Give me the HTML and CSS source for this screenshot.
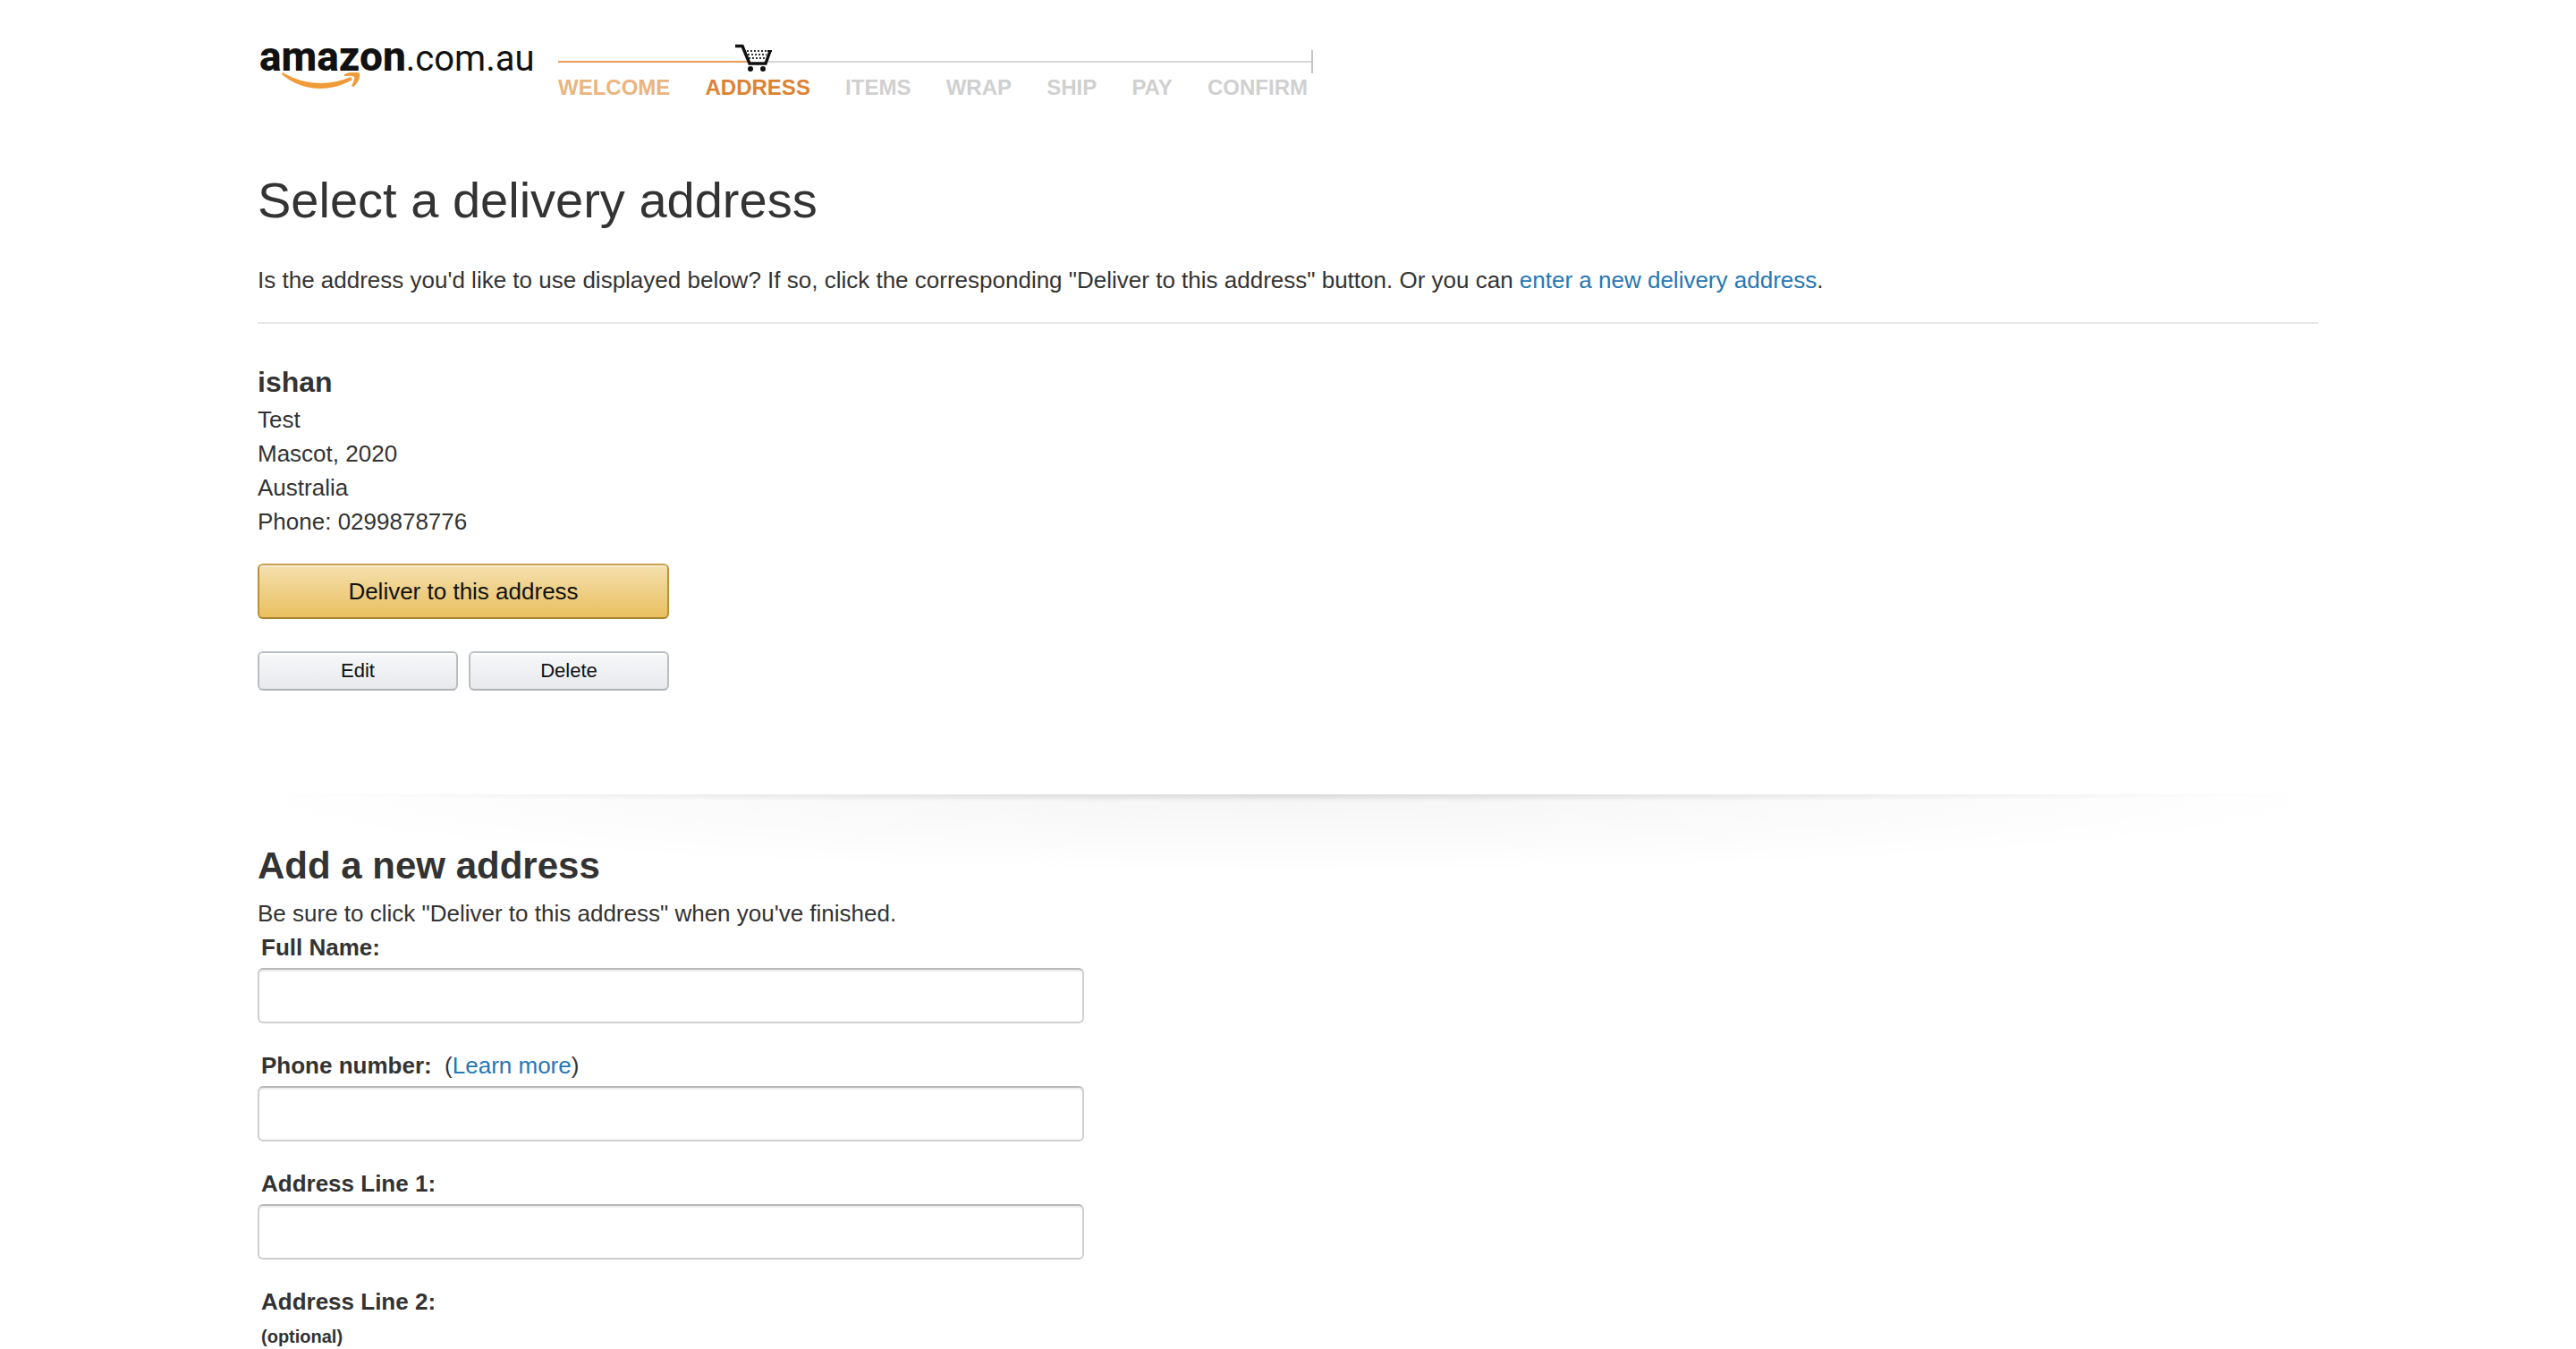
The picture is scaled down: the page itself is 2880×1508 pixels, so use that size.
FILE: index.html
```html
<!DOCTYPE html>
<html lang="en-AU">
<head>
<meta charset="utf-8">
<meta name="viewport" content="width=device-width, initial-scale=1">
<title>Select a delivery address</title>
<link rel="stylesheet" href="styles.css">
</head>
<body>
<div class="page">
  <header class="header">
    <div class="logo">
      <span class="logo-text"><b class="logo-name">amazon</b><span class="logo-domain">.com.au</span></span>
      <svg class="logo-smile" viewBox="0 0 88 20" aria-hidden="true">
        <path d="M1 0C24 14 52 16 77 5L79 8C54 23 22 21 0 2Z" fill="#f19a38"/>
        <path d="M70 2C76 -1 85 -1 87 1C88 6 85 12 80 16L78 15C80 11 82 7 81 5C79 3 74 4 70 4Z" fill="#f19a38"/>
      </svg>
    </div>
    <nav class="progress" aria-label="Checkout progress">
      <svg class="cart" viewBox="0 0 42 32" aria-hidden="true">
        <path d="M7 7H37L32 21H14Z" fill="#fff"/>
        <path d="M13 8H36M14 12H35M15 16H34" fill="none" stroke="#333" stroke-width="2" stroke-dasharray="2 2"/>
        <path d="M0 2.500H8L16 22H34L39 8" fill="none" stroke="#111" stroke-width="3.500"/>
        <path d="M36 8H41" stroke="#111" stroke-width="2"/>
        <circle cx="17" cy="28" r="3" fill="#111"/>
        <circle cx="31" cy="28" r="3" fill="#111"/>
      </svg>
      <div class="track"><span class="track-done"></span><span class="track-rest"></span><span class="track-end"></span></div>
      <ol class="steps">
        <li class="done">WELCOME</li>
        <li class="current" aria-current="step">ADDRESS</li>
        <li>ITEMS</li>
        <li>WRAP</li>
        <li>SHIP</li>
        <li>PAY</li>
        <li>CONFIRM</li>
      </ol>
    </nav>
  </header>

  <main>
    <h1>Select a delivery address</h1>
    <p class="intro">Is the address you'd like to use displayed below? If so, click the corresponding "Deliver to this address" button. Or you can <a href="#new-address">enter a new delivery address</a>.</p>

    <section class="saved">
      <h2 class="saved-name">ishan</h2>
      <address class="saved-lines">Test<br>Mascot, 2020<br>Australia<br>Phone: 0299878776</address>
      <div class="actions">
        <button type="button" class="btn btn-primary">Deliver to this address</button>
        <button type="button" class="btn btn-small">Edit</button>
        <button type="button" class="btn btn-small">Delete</button>
      </div>
    </section>

    <section class="new-address" id="new-address">
      <h2 class="new-title">Add a new address</h2>
      <p class="new-hint">Be sure to click "Deliver to this address" when you've finished.</p>
      <form class="form">
        <div class="field">
          <div class="field-head"><label for="name">Full Name:</label></div>
          <input type="text" id="name">
        </div>
        <div class="field">
          <div class="field-head"><label for="phone">Phone number:</label>&nbsp; (<a href="#phone">Learn more</a>)</div>
          <input type="text" id="phone">
        </div>
        <div class="field">
          <div class="field-head"><label for="line1">Address Line 1:</label></div>
          <input type="text" id="line1">
        </div>
        <div class="field">
          <div class="field-head"><strong>Address Line 2:</strong></div>
          <div class="field-note">(optional)</div>
        </div>
      </form>
    </section>
  </main>
</div>
</body>
</html>
```
FILE: styles.css
```css
* {
  box-sizing: border-box;
}

body {
  margin: 0;
  background: #fff;
  color: #333;
  font: 26px/38px "Liberation Sans", Arial, sans-serif;
}

h1, h2, p, ol {
  margin: 0;
  padding: 0;
}

a {
  color: #2677b5;
  text-decoration: none;
}

a:hover {
  text-decoration: underline;
}

.page {
  width: 80%;
  margin: 0 auto;
}

/* Header */
.header {
  display: flex;
  align-items: flex-start;
  height: 76px;
  margin-top: 36px;
}

.logo {
  position: relative;
  width: 336px;
  padding-left: 2px;
}

.logo-text {
  display: block;
  color: #111;
  font-family: Roboto, "Liberation Sans", Arial, sans-serif;
  line-height: 54px;
  white-space: nowrap;
}

.logo-name {
  font-size: 46px;
  font-weight: 800;
}

.logo-domain {
  font-size: 40px;
}

.logo-smile {
  position: absolute;
  left: 27px;
  top: 45px;
  width: 88px;
  height: 20px;
}

.progress {
  position: relative;
  width: 844px;
  padding-top: 20px;
}

.track {
  display: flex;
  align-items: center;
  height: 26px;
}

.track-done {
  flex: 1;
  height: 2px;
  background: #e79b5c;
}

.track-rest {
  flex: 3;
  height: 2px;
  background: #d6d6d6;
}

.track-end {
  width: 2px;
  height: 26px;
  background: #c4c4c4;
}

.cart {
  position: absolute;
  left: 198px;
  top: 13px;
  width: 42px;
  height: 32px;
}

.steps {
  display: flex;
  justify-content: space-between;
  padding: 2px 6px 0 0;
  color: #d0d0d0;
  font-size: 24px;
  font-weight: bold;
  line-height: 28px;
  list-style: none;
}

.steps .done {
  color: #e9b581;
}

.steps .current {
  color: #dc8333;
}

/* Heading and intro */
h1 {
  padding-top: 76px;
  font-size: 56px;
  font-weight: normal;
  line-height: 72px;
}

.intro {
  padding: 34px 0 28px;
  border-bottom: 2px solid #e7e7e7;
}

/* Saved address */
.saved {
  padding: 42px 0 116px;
}

.saved-name {
  font-size: 32px;
  line-height: 46px;
}

.saved-lines {
  font-style: normal;
}

.actions {
  display: grid;
  grid-template-columns: 1fr 1fr;
  gap: 36px 12px;
  width: 460px;
  max-width: 100%;
  padding-top: 28px;
}

.btn {
  border: 2px solid;
  border-radius: 6px;
  color: #111;
  font-family: inherit;
  cursor: pointer;
}

.btn-primary {
  grid-column: 1 / -1;
  height: 62px;
  border-color: #c9a253 #b89138 #a6822d;
  background: linear-gradient(#f4dfae, #e9c05f);
  box-shadow: inset 0 2px 0 #f8ebcb;
  font-size: 26px;
}

.btn-small {
  height: 44px;
  border-color: #bcc1c8 #bcbdc1 #adb1b8;
  background: linear-gradient(#f7f8fa, #e7e9ec);
  box-shadow: inset 0 2px 0 #fff;
  font-size: 22px;
}

/* New address */
.new-address {
  padding-top: 50px;
  background:
    radial-gradient(ellipse 50% 8px at 50% 0, rgba(0, 0, 0, .12), rgba(0, 0, 0, 0)) no-repeat,
    radial-gradient(ellipse 52% 88px at 50% 0, rgba(0, 0, 0, .04), rgba(0, 0, 0, 0)) no-repeat;
}

.new-title {
  font-size: 42px;
  line-height: 60px;
}

.new-hint {
  padding-top: 4px;
}

.form {
  display: grid;
  gap: 28px;
  max-width: 924px;
}

.field-head,
.field-note {
  padding-left: 4px;
}

.field label,
.field strong,
.field-note {
  font-weight: bold;
}

.field-note {
  padding-top: 8px;
  font-size: 20px;
  line-height: 24px;
}

.field input {
  display: block;
  width: 100%;
  height: 62px;
  margin-top: 4px;
  padding: 6px 14px;
  border: 2px solid #cfcfcf;
  border-top-color: #b8b8b8;
  border-radius: 6px;
  background: #fff;
  box-shadow: inset 0 2px 0 #ececec;
  color: #111;
  font: inherit;
}
```
